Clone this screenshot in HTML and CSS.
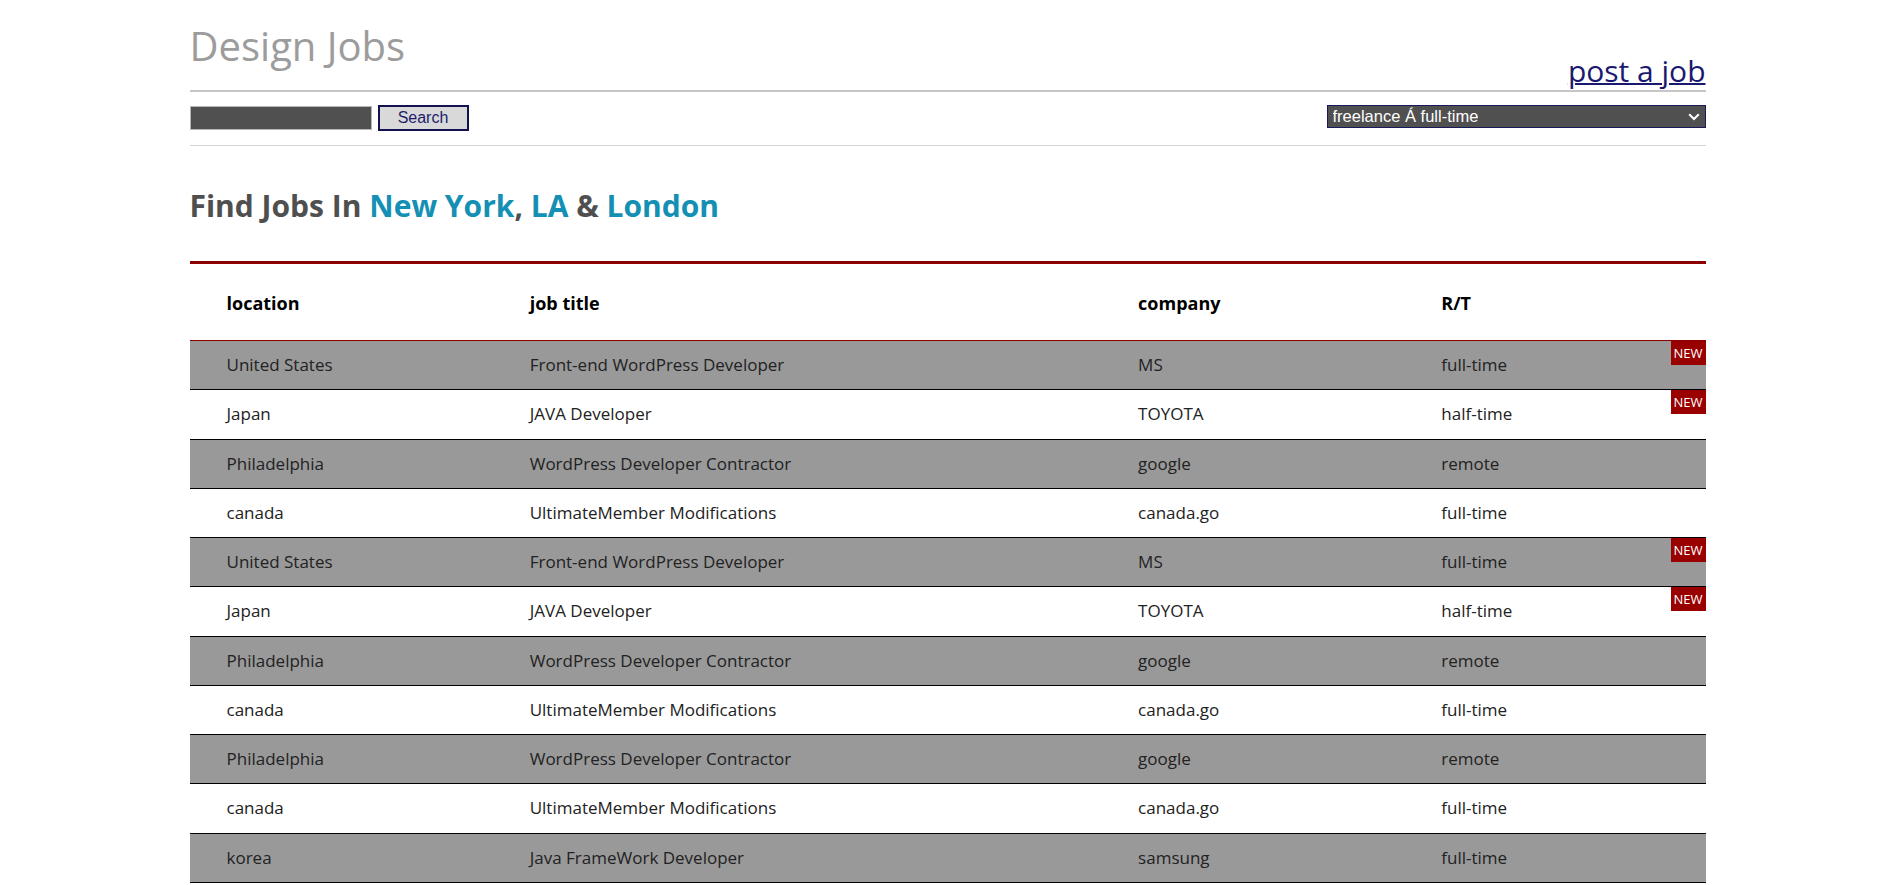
FILE: index.html
```html
<!DOCTYPE html>
<html lang="en">
<head>
<meta charset="utf-8">
<title>Design Jobs</title>
<link rel="stylesheet" href="styles.css">
</head>
<body>
<div class="wrap">
  <header class="top">
    <h1 class="logo">Design Jobs</h1>
    <a class="post" href="#">post a job</a>
  </header>
  <div class="search">
    <form class="form">
      <input class="field" type="text">
      <button class="btn" type="button">Search</button>
    </form>
    <div class="select-wrap">
      <select class="select">
        <option>freelance Á full-time</option>
      </select>
      <svg class="chev" width="12" height="8" viewBox="0 0 12 8"><path d="M1.2 1.2l4.8 4.8 4.8-4.8" fill="none" stroke="#fff" stroke-width="2"/></svg>
    </div>
  </div>
  <h2 class="title">Find Jobs In <span class="hl">New York</span>, <span class="hl">LA</span> &amp; <span class="hl">London</span></h2>
  <table class="jobs">
    <colgroup><col class="c1"><col class="c2"><col class="c3"><col class="c4"></colgroup>
    <thead>
      <tr><th>location</th><th>job title</th><th>company</th><th>R/T</th></tr>
    </thead>
    <tbody>
      <tr><td>United States</td><td>Front-end WordPress Developer</td><td>MS</td><td class="last">full-time<span class="new">NEW</span></td></tr>
      <tr><td>Japan</td><td>JAVA Developer</td><td>TOYOTA</td><td class="last">half-time<span class="new">NEW</span></td></tr>
      <tr><td>Philadelphia</td><td>WordPress Developer Contractor</td><td>google</td><td class="last">remote</td></tr>
      <tr><td>canada</td><td>UltimateMember Modifications</td><td>canada.go</td><td class="last">full-time</td></tr>
      <tr><td>United States</td><td>Front-end WordPress Developer</td><td>MS</td><td class="last">full-time<span class="new">NEW</span></td></tr>
      <tr><td>Japan</td><td>JAVA Developer</td><td>TOYOTA</td><td class="last">half-time<span class="new">NEW</span></td></tr>
      <tr><td>Philadelphia</td><td>WordPress Developer Contractor</td><td>google</td><td class="last">remote</td></tr>
      <tr><td>canada</td><td>UltimateMember Modifications</td><td>canada.go</td><td class="last">full-time</td></tr>
      <tr><td>Philadelphia</td><td>WordPress Developer Contractor</td><td>google</td><td class="last">remote</td></tr>
      <tr><td>canada</td><td>UltimateMember Modifications</td><td>canada.go</td><td class="last">full-time</td></tr>
      <tr><td>korea</td><td>Java FrameWork Developer</td><td>samsung</td><td class="last">full-time</td></tr>
    </tbody>
  </table>
</div>
</body>
</html>
```

FILE: styles.css
```css
html, body {
  margin: 0;
  padding: 0;
  background: #fff;
}
body {
  font-family: "Open Sans", "Noto Sans", sans-serif;
  color: #222;
}
.wrap {
  width: 80%;
  margin: 0 auto;
}
.top {
  display: flex;
  justify-content: space-between;
  height: 90px;
  border-bottom: 2px solid #c6c6c6;
}
.logo {
  margin: 26px 0 0;
  font-size: 40px;
  line-height: 40px;
  font-weight: 400;
  color: #9c9c9c;
}
.post {
  align-self: flex-end;
  margin-bottom: 4px;
  font-size: 30px;
  line-height: 30px;
  color: #191970;
  text-decoration: underline;
  text-decoration-thickness: 2px;
}
.search {
  display: flex;
  justify-content: space-between;
  align-items: flex-start;
  padding-top: 13px;
  height: 40px;
  border-bottom: 1px solid #d4d4d4;
}
.form {
  display: flex;
  align-items: center;
  gap: 6px;
  margin: 0;
}
.field {
  box-sizing: border-box;
  width: 182px;
  height: 24px;
  margin: 0;
  padding: 0 4px;
  background: #505050;
  border: 1px solid #b6b6b6;
  color: #fff;
}
.btn {
  box-sizing: border-box;
  width: 91px;
  height: 26px;
  margin: 0;
  padding: 0;
  background: #d9d9d9;
  border: 2px solid #12124e;
  color: #1d1d6b;
  font-family: "Liberation Sans", Arial, sans-serif;
  font-size: 16px;
}
.select-wrap {
  position: relative;
}
.select {
  box-sizing: border-box;
  width: 379px;
  height: 23px;
  margin: 0;
  padding: 0 0 0 5px;
  appearance: none;
  -webkit-appearance: none;
  background: #505050;
  border: 1px solid #1a1a5a;
  border-radius: 0;
  color: #fff;
  font-family: "Liberation Sans", Arial, sans-serif;
  font-size: 16.5px;
  line-height: 21px;
}
.chev {
  position: absolute;
  right: 6px;
  top: 8px;
  pointer-events: none;
}
.title {
  margin: 45px 0 40px;
  font-size: 30px;
  line-height: 30px;
  font-weight: 700;
  color: #4f4f4f;
}
.hl {
  color: #1390b4;
}
.jobs {
  width: 100%;
  table-layout: fixed;
  border-collapse: separate;
  border-spacing: 0;
  border-top: 3px solid #8b0000;
}
.c1 { width: 20%; }
.c2 { width: 40%; }
.c3 { width: 20%; }
.c4 { width: 20%; }
.jobs th {
  padding: 27px 0 25px 37px;
  line-height: 24px;
  font-size: 18px;
  font-weight: 700;
  color: #000;
  text-align: left;
  border-bottom: 1px solid #8b0000;
}
.jobs th:nth-child(n+3),
.jobs td:nth-child(n+3) {
  padding-left: 39px;
}
.jobs td {
  padding: 14px 0 14px 37px;
  line-height: 20.27px;
  font-size: 17px;
  color: #222;
  border-bottom: 1px solid #000;
  white-space: nowrap;
}
.jobs tbody tr:nth-child(odd) td {
  background: #999999;
}
.jobs td.last {
  position: relative;
}
.new {
  position: absolute;
  top: 0;
  right: 0;
  width: 35px;
  height: 24px;
  line-height: 24px;
  background: #990000;
  color: #fff;
  font-size: 13px;
  text-align: center;
}
```
